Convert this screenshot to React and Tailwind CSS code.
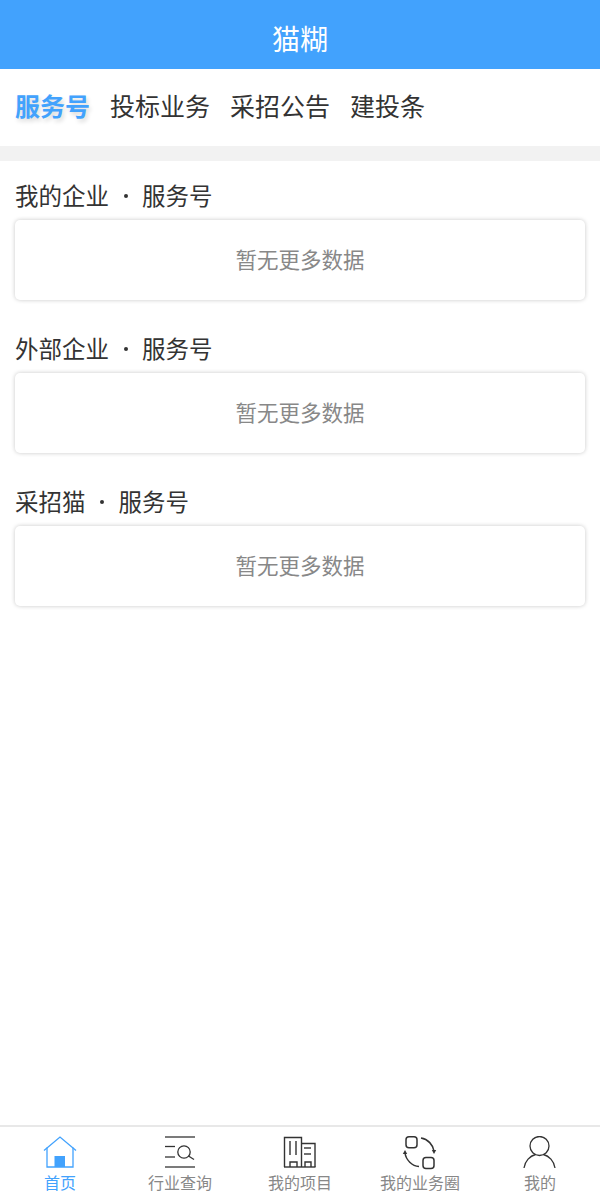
import React from "react";

const FONT = "font-['Noto_Sans_CJK_SC','Noto_Sans',sans-serif]";

const tabs = ["服务号", "投标业务", "采招公告", "建投条"];

const sections = ["我的企业", "外部企业", "采招猫"];

const HomeIcon = () => (
  <svg width="36" height="36" viewBox="0 0 36 36" fill="none" stroke="#42a2fd" strokeWidth="1.3">
    <path d="M2 14.5 L18 1 L34 14.5" />
    <path d="M5 11.5 V31 H31 V11.5" />
    <rect x="12.5" y="20" width="10.5" height="11" fill="#42a2fd" stroke="none" />
  </svg>
);

const SearchIcon = () => (
  <svg width="36" height="36" viewBox="0 0 36 36" fill="none" stroke="#333" strokeWidth="1.3">
    <path d="M3 1 H33" />
    <path d="M3 10.5 H13" />
    <path d="M3 21 H13" />
    <path d="M3 31 H33" />
    <circle cx="22" cy="16" r="6.2" />
    <path d="M26.5 20 L32 23.5" />
  </svg>
);

const BuildingIcon = () => (
  <svg width="36" height="36" viewBox="0 0 36 36" fill="none" stroke="#333" strokeWidth="1.4">
    <path d="M2.5 31 V1.5 H19.5 V31" />
    <path d="M19.5 7.5 H33 V31" />
    <path d="M2 31 H33.5" />
    <path d="M8 5 V19" />
    <path d="M14 5 V19" />
    <path d="M8 31 V26 H15 V31" />
    <path d="M23 31 V26 H29 V31" />
    <path d="M22 12 H29" />
    <path d="M22 18 H29" />
  </svg>
);

const CircleIcon = () => (
  <svg width="36" height="36" viewBox="0 0 36 36" fill="none" stroke="#333" strokeWidth="1.5">
    <rect x="4" y="0.8" width="11" height="11" rx="3" />
    <rect x="21" y="21.5" width="11" height="11" rx="3" />
    <path d="M19 2 C26 3 31 9 32 15" />
    <path d="M29.8 14 L32 18 L34.2 14 Z" fill="#333" stroke="none" />
    <path d="M17 30.5 C10 30 4 24 3 17" />
    <path d="M0.8 18 L3 14 L5.2 18 Z" fill="#333" stroke="none" />
  </svg>
);

const UserIcon = () => (
  <svg width="36" height="36" viewBox="0 0 36 36" fill="none" stroke="#333" strokeWidth="1.3">
    <circle cx="17.5" cy="10" r="9.5" />
    <path d="M2 32 C3 25 8 20 13.5 18.5" />
    <path d="M33 32 C32 25 27 20 21.5 18.5" />
  </svg>
);

const navItems = [
  { label: "首页", icon: <HomeIcon />, active: true },
  { label: "行业查询", icon: <SearchIcon /> },
  { label: "我的项目", icon: <BuildingIcon /> },
  { label: "我的业务圈", icon: <CircleIcon /> },
  { label: "我的", icon: <UserIcon /> },
];

export default function App() {
  return (
    <div className={`flex h-[1200px] w-[600px] flex-col overflow-hidden bg-white ${FONT}`}>
      <header className="flex h-[69px] items-center justify-center bg-[#42a2fd] pt-[7px] text-[28px] text-white">
        猫糊
      </header>

      <nav className="flex h-[77px] items-center gap-[20px] px-[15px] pb-[3px] text-[25px] text-[#333]">
        {tabs.map((tab, i) => (
          <span
            key={tab}
            className={i === 0 ? "font-bold text-[#42a2fd] [text-shadow:2px_3px_4px_rgba(0,0,0,0.15)]" : ""}
          >
            {tab}
          </span>
        ))}
      </nav>

      <div className="h-[15px] bg-[#f2f2f2]" />

      <main className="flex flex-1 flex-col gap-[32px] px-[15px] pt-[18px]">
        {sections.map((name) => (
          <section key={name}>
            <h2 className="flex h-[33px] items-center text-[23.5px] leading-none font-normal text-[#333]">
              {name}
              <span className="mx-[14.5px] h-[4px] w-[4px] rounded-full bg-[#333]" />
              服务号
            </h2>
            <div className="mt-[8px] flex h-[80px] items-center justify-center rounded-[5px] bg-white pb-[2px] text-[21.5px] text-[#888] shadow-[0_0_4px_rgba(0,0,0,0.22)]">
              暂无更多数据
            </div>
          </section>
        ))}
      </main>

      <footer className="flex h-[75px] border-t-2 border-[#e8e8e8] pt-[9px]">
        {navItems.map((item) => (
          <div key={item.label} className="flex flex-1 flex-col items-center">
            {item.icon}
            <span className={`text-[16px] leading-[20px] ${item.active ? "text-[#42a2fd]" : "text-[#888]"}`}>
              {item.label}
            </span>
          </div>
        ))}
      </footer>
    </div>
  );
}
